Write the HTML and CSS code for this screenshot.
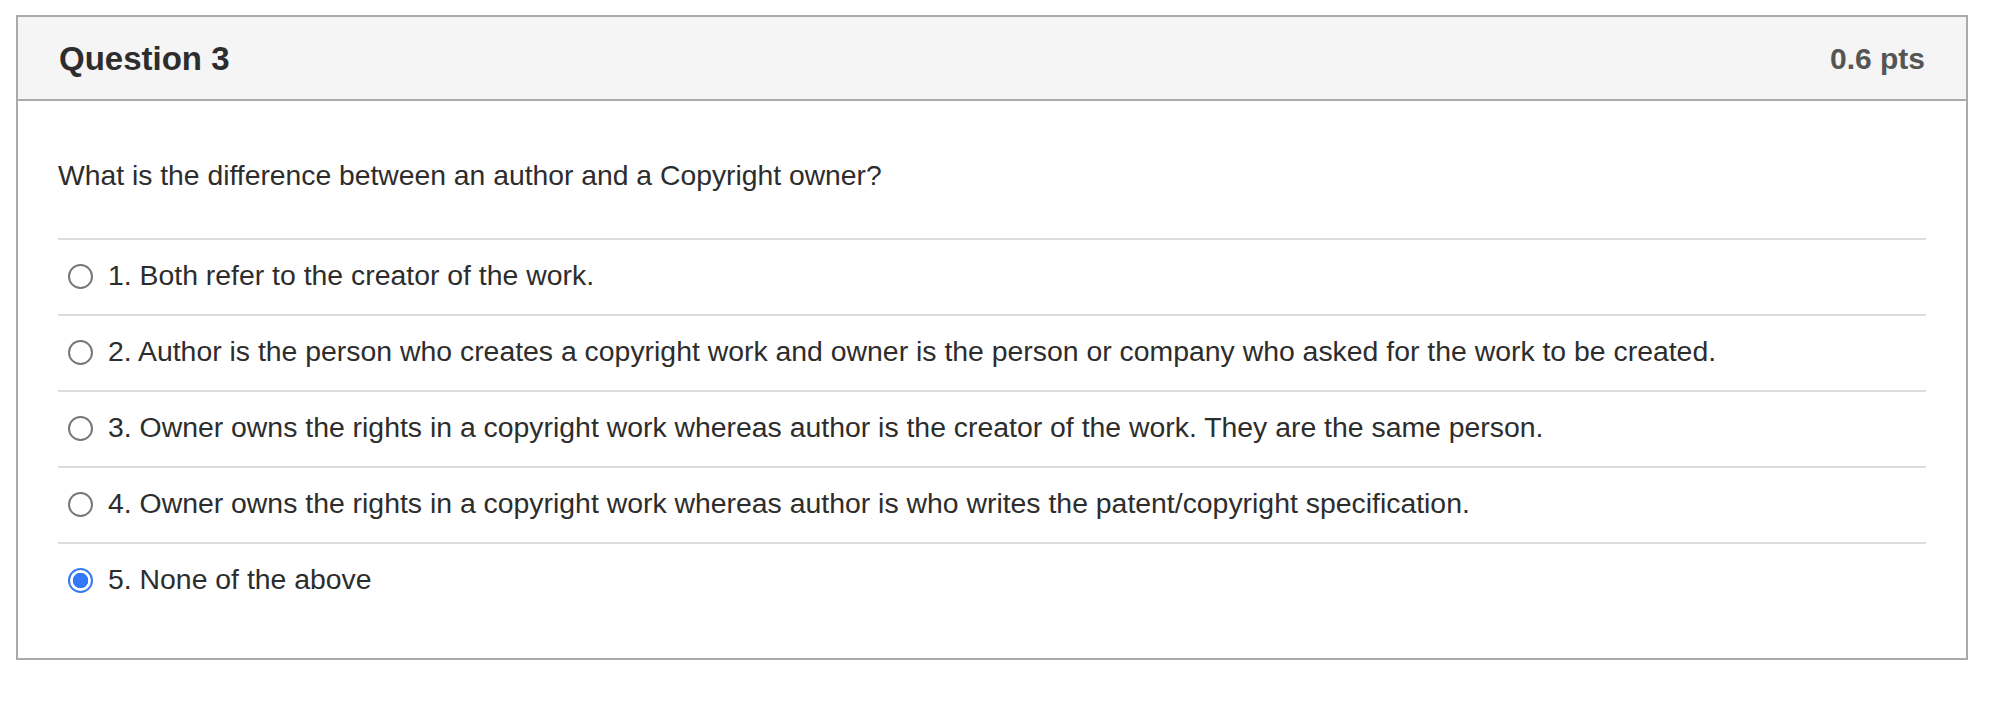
FILE: index.html
```html
<!DOCTYPE html>
<html lang="en">
<head>
<meta charset="utf-8">
<title>Question 3</title>
<link rel="stylesheet" href="styles.css">
</head>
<body>
<div class="question">
  <div class="question-header">
    <h2 class="question-title">Question 3</h2>
    <span class="question-points">0.6 pts</span>
  </div>
  <div class="question-body">
    <p class="question-text">What is the difference between an author and a Copyright owner?</p>
    <ul class="answers">
      <li class="answer"><span class="radio"></span><span class="answer-label">1. Both refer to the creator of the work.</span></li>
      <li class="answer"><span class="radio"></span><span class="answer-label">2. Author is the person who creates a copyright work and owner is the person or company who asked for the work to be created.</span></li>
      <li class="answer"><span class="radio"></span><span class="answer-label">3. Owner owns the rights in a copyright work whereas author is the creator of the work. They are the same person.</span></li>
      <li class="answer"><span class="radio"></span><span class="answer-label">4. Owner owns the rights in a copyright work whereas author is who writes the patent/copyright specification.</span></li>
      <li class="answer"><span class="radio radio-checked"></span><span class="answer-label">5. None of the above</span></li>
    </ul>
  </div>
</div>
</body>
</html>
```

FILE: styles.css
```css
* { box-sizing: border-box; }

html, body {
  margin: 0;
  padding: 0;
  background: #ffffff;
}

body {
  font-family: "Liberation Sans", Arial, Helvetica, sans-serif;
  color: #2d2d2d;
  padding: 15px 0 0 16px;
}

.question {
  width: 1952px;
  border: 2px solid #aaaaaa;
  background: #ffffff;
}

.question-header {
  display: flex;
  align-items: center;
  justify-content: space-between;
  height: 84px;
  padding: 1px 41px 0 41px;
  background: #f5f5f5;
  border-bottom: 2px solid #aaaaaa;
}

.question-title {
  margin: 0;
  font-size: 33px;
  font-weight: bold;
  color: #2d2d2d;
}

.question-points {
  font-size: 30px;
  font-weight: bold;
  color: #555555;
}

.question-body {
  padding: 56px 40px 40px 40px;
}

.question-text {
  margin: 0 0 45px 0;
  font-size: 28.3px;
  line-height: 36px;
}

.answers {
  list-style: none;
  margin: 0;
  padding: 0;
}

.answer {
  display: flex;
  align-items: center;
  height: 76px;
  border-top: 2px solid #dddddd;
  padding: 0 0 1px 10px;
  font-size: 28.4px;
}

.radio {
  flex: none;
  width: 25px;
  height: 25px;
  border-radius: 50%;
  border: 2px solid #777777;
  background: #ffffff;
  margin-right: 15px;
}

.radio-checked {
  border: 2.5px solid #3478f6;
  background: radial-gradient(circle, #3478f6 0 7.5px, #ffffff 8px);
}

.answer-label {
  line-height: 30px;
  padding-bottom: 3px;
}
```
